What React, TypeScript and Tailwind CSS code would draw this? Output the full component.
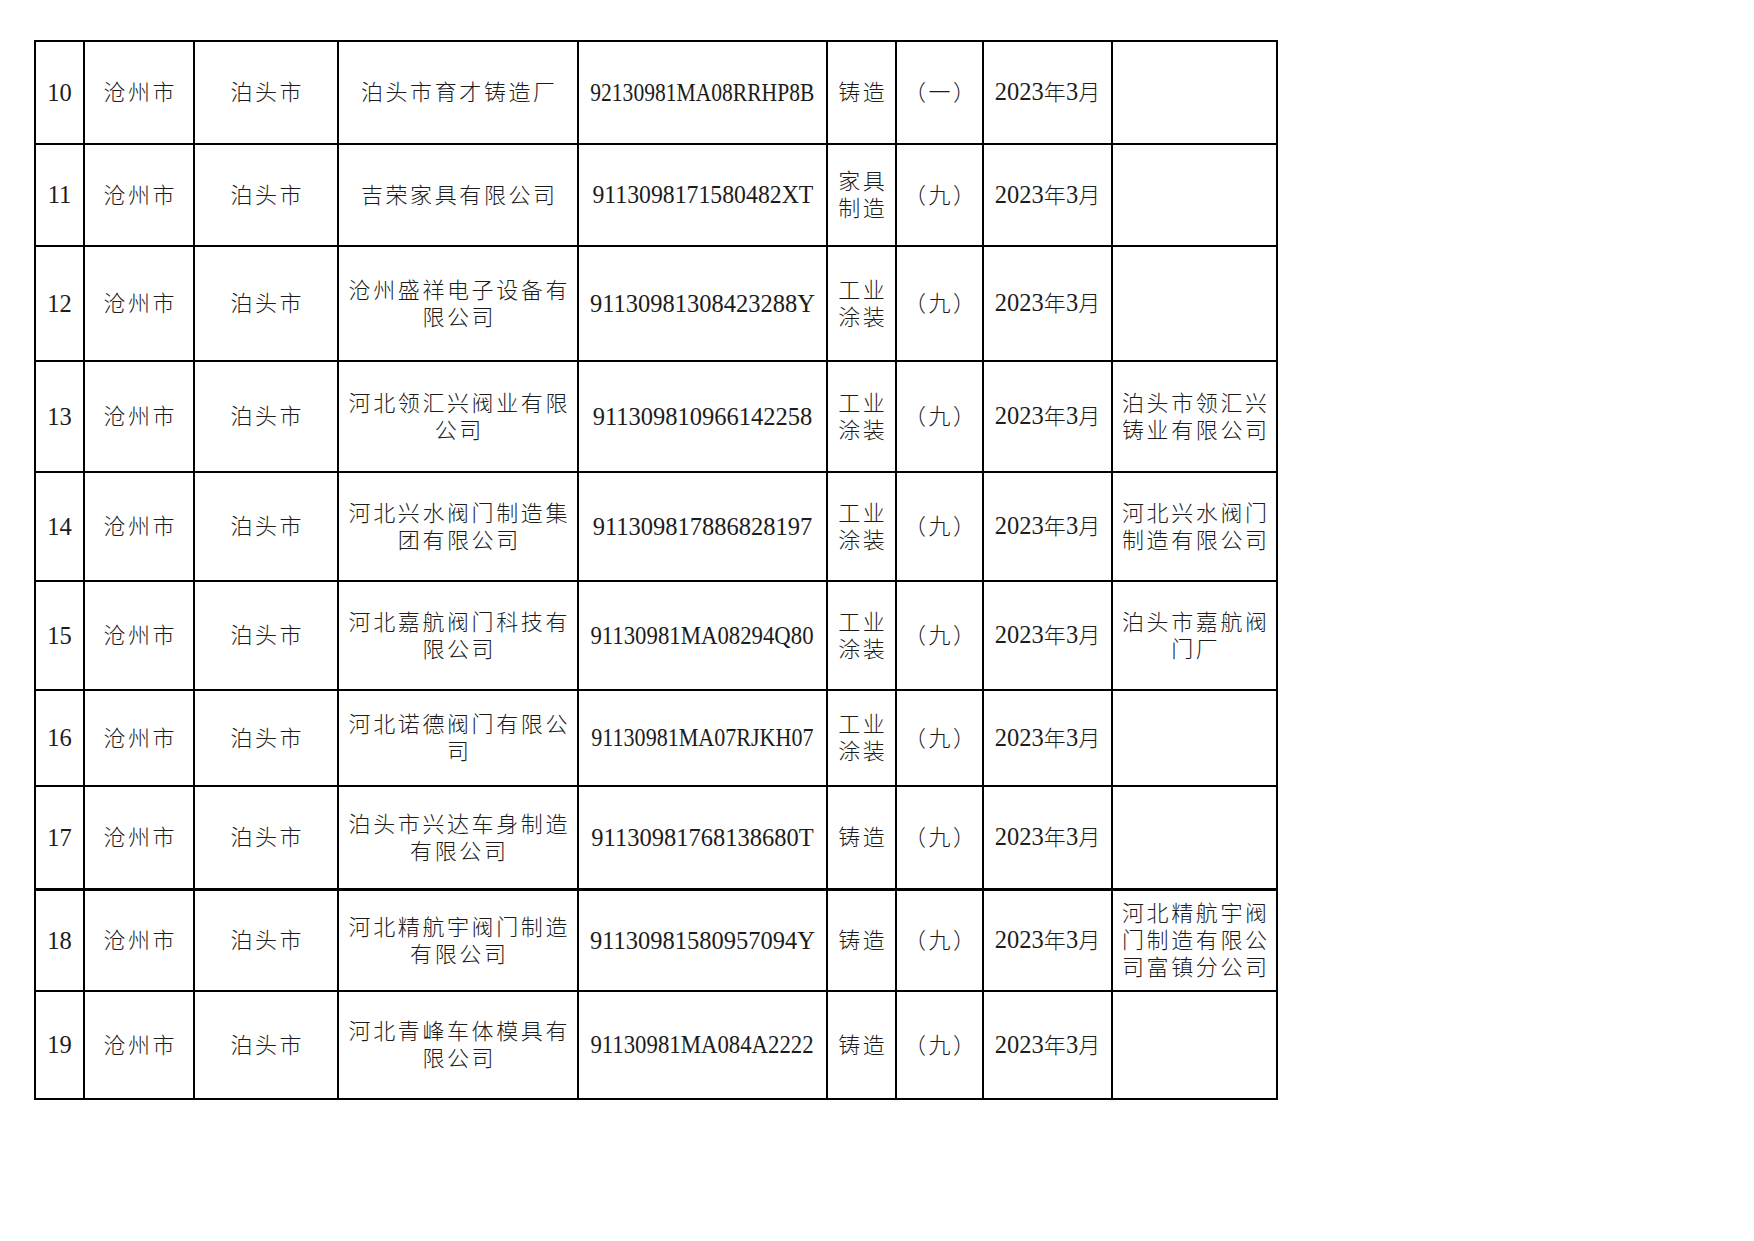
type Row = {
  no: string;
  name: string[];
  code: string;
  codeFit: string;
  kind: string[];
  cls: string;
  note: string[];
  h: string;
  top: string;
};

const rows: Row[] = [
  { no: '10', name: ['泊头市育才铸造厂'], code: '92130981MA08RRHP8B', codeFit: 'scale-x-[0.88]', kind: ['铸造'], cls: '（一）', note: [], h: 'h-[103px]', top: '' },
  { no: '11', name: ['吉荣家具有限公司'], code: '9113098171580482XT', codeFit: 'scale-x-[0.97]', kind: ['家具', '制造'], cls: '（九）', note: [], h: 'h-[102px]', top: '' },
  { no: '12', name: ['沧州盛祥电子设备有', '限公司'], code: '91130981308423288Y', codeFit: '', kind: ['工业', '涂装'], cls: '（九）', note: [], h: 'h-[115px]', top: '' },
  { no: '13', name: ['河北领汇兴阀业有限', '公司'], code: '911309810966142258', codeFit: '', kind: ['工业', '涂装'], cls: '（九）', note: ['泊头市领汇兴', '铸业有限公司'], h: 'h-[111px]', top: '' },
  { no: '14', name: ['河北兴水阀门制造集', '团有限公司'], code: '911309817886828197', codeFit: '', kind: ['工业', '涂装'], cls: '（九）', note: ['河北兴水阀门', '制造有限公司'], h: 'h-[109px]', top: '' },
  { no: '15', name: ['河北嘉航阀门科技有', '限公司'], code: '91130981MA08294Q80', codeFit: 'scale-x-[0.93]', kind: ['工业', '涂装'], cls: '（九）', note: ['泊头市嘉航阀', '门厂'], h: 'h-[109px]', top: '' },
  { no: '16', name: ['河北诺德阀门有限公', '司'], code: '91130981MA07RJKH07', codeFit: 'scale-x-[0.9]', kind: ['工业', '涂装'], cls: '（九）', note: [], h: 'h-[96px]', top: '' },
  { no: '17', name: ['泊头市兴达车身制造', '有限公司'], code: '91130981768138680T', codeFit: '', kind: ['铸造'], cls: '（九）', note: [], h: 'h-[103px]', top: '' },
  { no: '18', name: ['河北精航宇阀门制造', '有限公司'], code: '91130981580957094Y', codeFit: '', kind: ['铸造'], cls: '（九）', note: ['河北精航宇阀', '门制造有限公', '司富镇分公司'], h: 'h-[102px]', top: 'border-t border-black' },
  { no: '19', name: ['河北青峰车体模具有', '限公司'], code: '91130981MA084A2222', codeFit: 'scale-x-[0.93]', kind: ['铸造'], cls: '（九）', note: [], h: 'h-[108px]', top: '' },
];

// cjk cells: smaller glyphs with extra spacing, like the song-style font in the sheet
const cjk = 'text-[22px] tracking-[2.6px] pl-[2.6px] font-light leading-[27px]';

const Cell = ({ children, className = '' }: { children?: React.ReactNode; className?: string }) => (
  <div className={`flex flex-col items-center justify-center text-center border-r-2 border-b-2 border-black ${className}`}>
    {children}
  </div>
);

const Lines = ({ lines }: { lines: string[] }) => (
  <>
    {lines.map((l, i) => (
      <span key={i} className="block">{l}</span>
    ))}
  </>
);

export default function App() {
  return (
    <div className="w-[1754px] h-[1241px] bg-white pt-[40px] pl-[34px] font-['Liberation_Serif','Noto_Sans_CJK_SC',serif] text-[24.5px] leading-[28px] text-[#1c1c1c]">
      <div className="inline-grid grid-cols-[49px_110px_144px_240px_249px_69px_87px_129px_165px] border-l-2 border-t-2 border-black">
        {rows.map((r) => (
          <div key={r.no} className="contents">
            <Cell className={`${r.h} ${r.top}`}>{r.no}</Cell>
            <Cell className={`${r.h} ${r.top} ${cjk}`}>沧州市</Cell>
            <Cell className={`${r.h} ${r.top} ${cjk}`}>泊头市</Cell>
            <Cell className={`${r.h} ${r.top} ${cjk}`}>
              <Lines lines={r.name} />
            </Cell>
            <Cell className={`${r.h} ${r.top} whitespace-nowrap`}>
              <span className={`block ${r.codeFit}`}>{r.code}</span>
            </Cell>
            <Cell className={`${r.h} ${r.top} ${cjk}`}>
              <Lines lines={r.kind} />
            </Cell>
            <Cell className={`${r.h} ${r.top} ${cjk}`}>{r.cls}</Cell>
            <Cell className={`${r.h} ${r.top} whitespace-nowrap`}>
              <span>
                2023<span className="text-[22px] font-light">年</span>3<span className="text-[22px] font-light">月</span>
              </span>
            </Cell>
            <Cell className={`${r.h} ${r.top} ${cjk}`}>
              <Lines lines={r.note} />
            </Cell>
          </div>
        ))}
      </div>
    </div>
  );
}
